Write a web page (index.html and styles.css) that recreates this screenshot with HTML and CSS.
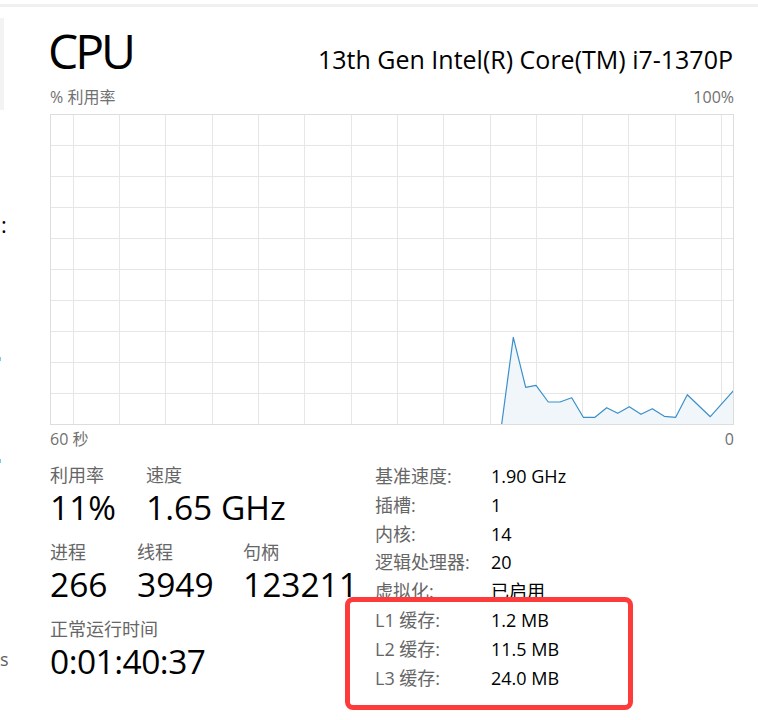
FILE: index.html
```html
<!DOCTYPE html>
<html lang="zh-CN">
<head>
<meta charset="utf-8">
<title>CPU</title>
<link rel="stylesheet" href="styles.css">
</head>
<body>
<div class="topbar"></div>
<div class="layout">
  <aside class="side">
    <div class="side-panel"></div>
    <div class="side-colon">:</div>
    <div class="side-mark m1"></div>
    <div class="side-mark m2"></div>
    <div class="side-s">s</div>
  </aside>
  <main class="perf">
    <header class="head">
      <h1 class="title">CPU</h1>
      <div class="model">13th Gen Intel(R) Core(TM) i7-1370P</div>
    </header>
    <div class="axis axis-top"><span>% 利用率</span><span>100%</span></div>
    <svg class="chart" width="684" height="311" viewBox="0 0 684 311">
      <g class="grid" stroke="#e6e6e6" stroke-width="1">
        <line x1="23.5" y1="0" x2="23.5" y2="311"/>
        <line x1="69.5" y1="0" x2="69.5" y2="311"/>
        <line x1="115.5" y1="0" x2="115.5" y2="311"/>
        <line x1="162.5" y1="0" x2="162.5" y2="311"/>
        <line x1="208.5" y1="0" x2="208.5" y2="311"/>
        <line x1="254.5" y1="0" x2="254.5" y2="311"/>
        <line x1="301.5" y1="0" x2="301.5" y2="311"/>
        <line x1="347.5" y1="0" x2="347.5" y2="311"/>
        <line x1="393.5" y1="0" x2="393.5" y2="311"/>
        <line x1="440.5" y1="0" x2="440.5" y2="311"/>
        <line x1="486.5" y1="0" x2="486.5" y2="311"/>
        <line x1="532.5" y1="0" x2="532.5" y2="311"/>
        <line x1="578.5" y1="0" x2="578.5" y2="311"/>
        <line x1="625.5" y1="0" x2="625.5" y2="311"/>
        <line x1="671.5" y1="0" x2="671.5" y2="311"/>
        <line x1="0" y1="31.5" x2="684" y2="31.5"/>
        <line x1="0" y1="62.5" x2="684" y2="62.5"/>
        <line x1="0" y1="93.5" x2="684" y2="93.5"/>
        <line x1="0" y1="124.5" x2="684" y2="124.5"/>
        <line x1="0" y1="155.5" x2="684" y2="155.5"/>
        <line x1="0" y1="186.5" x2="684" y2="186.5"/>
        <line x1="0" y1="217.5" x2="684" y2="217.5"/>
        <line x1="0" y1="248.5" x2="684" y2="248.5"/>
        <line x1="0" y1="279.5" x2="684" y2="279.5"/>
      </g>
      <polygon fill="#f1f6fa" points="451.7,310 463.3,223.3 475.7,273.3 486,271.3 498.3,288 510,288 521.7,283.7 533.3,303.3 545,303.3 556.7,293.7 567.7,299.3 579.3,292.7 591,300.3 602.3,294.7 614.3,302.3 625.7,303.3 637.3,280.7 660.3,302.7 683.5,276.7 683.5,310"/>
      <polyline fill="none" stroke="#3a90cc" stroke-width="1.2" stroke-linejoin="round" points="451.7,310 463.3,223.3 475.7,273.3 486,271.3 498.3,288 510,288 521.7,283.7 533.3,303.3 545,303.3 556.7,293.7 567.7,299.3 579.3,292.7 591,300.3 602.3,294.7 614.3,302.3 625.7,303.3 637.3,280.7 660.3,302.7 683.5,276.7"/>
      <rect x="0.5" y="0.5" width="683" height="310" fill="none" stroke="#dddddd" stroke-width="1"/>
    </svg>
    <div class="axis axis-bottom"><span>60 秒</span><span>0</span></div>
    <section class="stats">
      <div class="live">
        <div class="row r1">
          <div class="stat"><div class="label">利用率</div><div class="value">11%</div></div>
          <div class="stat"><div class="label">速度</div><div class="value">1.65 GHz</div></div>
        </div>
        <div class="row r2">
          <div class="stat"><div class="label">进程</div><div class="value">266</div></div>
          <div class="stat"><div class="label">线程</div><div class="value">3949</div></div>
          <div class="stat"><div class="label">句柄</div><div class="value">123211</div></div>
        </div>
        <div class="row r3">
          <div class="stat"><div class="label">正常运行时间</div><div class="value uptime">0:01:40:37</div></div>
        </div>
      </div>
      <div class="specs">
        <dl class="spec-list">
          <dt>基准速度:</dt><dd>1.90 GHz</dd>
          <dt>插槽:</dt><dd>1</dd>
          <dt>内核:</dt><dd>14</dd>
          <dt>逻辑处理器:</dt><dd>20</dd>
          <dt>虚拟化:</dt><dd>已启用</dd>
          <dt>L1 缓存:</dt><dd>1.2 MB</dd>
          <dt>L2 缓存:</dt><dd>11.5 MB</dd>
          <dt>L3 缓存:</dt><dd>24.0 MB</dd>
        </dl>
        <div class="highlight"></div>
      </div>
    </section>
  </main>
</div>
</body>
</html>
```

FILE: styles.css
```css
html, body {
  margin: 0;
  padding: 0;
  background: #ffffff;
}

body {
  width: 758px;
  height: 720px;
  overflow: hidden;
  font-family: "Open Sans", "Noto Sans CJK SC", sans-serif;
  color: #000000;
}

.topbar {
  margin-top: 4px;
  height: 3px;
  background: #f0f0f0;
}

.layout {
  display: flex;
  align-items: flex-start;
}

/* cut-off navigation column at the left edge */
.side {
  flex: none;
  width: 10px;
  display: flex;
  flex-direction: column;
  overflow: hidden;
}

.side-panel {
  margin-top: 11px;
  width: 4px;
  height: 92px;
  background: #f3f3f3;
}

.side-colon {
  margin-top: 103px;
  margin-left: 1px;
  font-size: 22px;
  line-height: 22px;
  color: #000000;
}

.side-mark {
  width: 1px;
  height: 4px;
  background: #7ccbec;
}

.m1 { margin-top: 122px; }
.m2 { margin-top: 98px; }

.side-s {
  margin-top: 187px;
  margin-left: 0;
  font-size: 18px;
  line-height: 18px;
  color: #606060;
}

.perf {
  flex: none;
  width: 684px;
  margin-left: 40px;
  padding-top: 16px;
  position: relative;
}

.head {
  display: flex;
  justify-content: space-between;
  align-items: baseline;
  height: 56px;
}

.title {
  margin: 0 0 0 -2px;
  font-size: 48px;
  line-height: 56px;
  font-weight: 400;
  letter-spacing: -3px;
}

.model {
  font-size: 25px;
  line-height: 30px;
  margin-right: 1px;
}

.axis {
  display: flex;
  justify-content: space-between;
  font-size: 16px;
  line-height: 20px;
  color: #707070;
}

.axis-top {
  margin-top: 8px;
}

.chart {
  display: block;
  margin-top: 7px;
}

.axis-bottom {
  margin-top: 4px;
}

.stats {
  display: flex;
  margin-top: 14px;
  position: relative;
}

.live {
  flex: none;
  width: 325px;
}

.row {
  display: grid;
}

.row + .row {
  margin-top: 14px;
}

.r1 { grid-template-columns: 96px auto; }
.r2 { grid-template-columns: 87px 106px auto; }
.r3 { grid-template-columns: auto; }

.label {
  font-size: 18px;
  line-height: 24px;
  color: #666666;
}

.value {
  margin-top: 1px;
  font-size: 33.5px;
  line-height: 38px;
  white-space: nowrap;
}

.uptime {
  letter-spacing: -0.5px;
}

.specs {
  flex: none;
  position: relative;
}

.spec-list {
  margin: -1px 0 0 0;
  display: grid;
  grid-template-columns: 116px auto;
  font-size: 18px;
  line-height: 28.8px;
}

.spec-list dt {
  color: #666666;
}

.spec-list dd {
  margin: 0;
  color: #000000;
  white-space: nowrap;
}

/* red annotation frame over the cache rows */
.highlight {
  position: absolute;
  left: -30px;
  top: 134px;
  width: 288px;
  height: 113px;
  box-sizing: border-box;
  border: 5px solid #fe3b3b;
  border-radius: 8px;
}
```
